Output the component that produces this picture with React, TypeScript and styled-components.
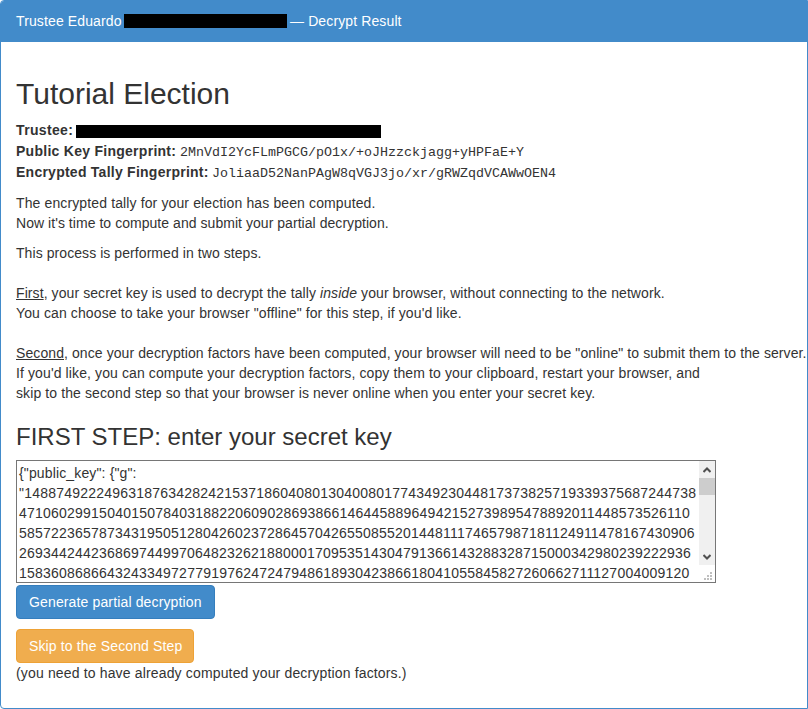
import React from "react";
import styled, { createGlobalStyle } from "styled-components";

const GlobalStyle = createGlobalStyle`
  *, *::before, *::after { box-sizing: border-box; }
  html, body { margin: 0; background: #fff; overflow: hidden; }
  body {
    font-family: "Liberation Sans", Arial, Helvetica, sans-serif;
    font-size: 14px;
    line-height: 20px;
    color: #333;
  }
`;

const Panel = styled.section`
  width: 808px;
  height: 709px;
  border: 1px solid #428bca;
  border-radius: 4px 0 0 4px;
  background: #fff;
  overflow: hidden;
  white-space: nowrap;
`;

const PanelHeading = styled.header`
  display: flex;
  align-items: center;
  height: 41px;
  padding: 0 15px 1px;
  background: #428bca;
  color: #fff;
`;

const Redaction = styled.span<{ $width: number; $height: number; $left: number; $right?: number }>`
  display: block;
  flex: none;
  width: ${(p) => p.$width}px;
  height: ${(p) => p.$height}px;
  margin-left: ${(p) => p.$left}px;
  margin-right: ${(p) => p.$right ?? 0}px;
  background: #000;
`;

const HeadingText = styled.span<{ $width: number }>`
  flex: none;
  width: ${(p) => p.$width}px;
  letter-spacing: 0.12px;
`;

const PanelBody = styled.div`
  padding: 35px 0 0 15px;
`;

const Title = styled.h2`
  margin: 0 0 10px;
  font-size: 30px;
  font-weight: 500;
  line-height: 33px;
`;

const StepTitle = styled.h3`
  margin: 20px 0 10px;
  font-size: 24px;
  font-weight: 500;
  line-height: 27px;
`;

const Facts = styled.div`
  margin-bottom: 10px;
`;

const Fact = styled.div`
  display: flex;
  align-items: flex-start;
  height: 21px;
  ${Redaction} { margin-top: 5px; }
`;

const Label = styled.strong<{ $width: number; $track: number }>`
  flex: none;
  width: ${(p) => p.$width}px;
  letter-spacing: ${(p) => p.$track}px;
`;

const Fingerprint = styled.span`
  font-family: "Liberation Mono", "Courier New", monospace;
  font-size: 13.333px;
  line-height: 23px;
`;

const Paragraph = styled.p`
  margin: 0 0 10px;
`;

const Line = styled.span<{ $track: number }>`
  display: block;
  height: 20px;
  letter-spacing: ${(p) => p.$track}px;
`;

const KeyField = styled.div`
  display: flex;
  width: 700px;
  height: 123px;
  margin-bottom: 2px;
  border: 1px solid #767676;
`;

const KeyText = styled.div`
  flex: 1;
  min-width: 0;
  padding: 2px 0 0 2px;
  overflow: hidden;
  font-kerning: normal;
`;

const ScrollColumn = styled.div`
  display: flex;
  flex-direction: column;
  width: 16px;
`;

const Track = styled.div`
  height: 104px;
  background: #f0f0f0;
`;

const Thumb = styled.div`
  height: 17px;
  background: #cdcdcd;
`;

const ArrowCell = styled.div`
  display: flex;
  height: 17px;
  padding: 6px 0 0 4px;
`;

const TrackSpace = styled.div`
  height: 53px;
`;

const Corner = styled.div`
  display: flex;
  padding: 7px 0 0 5px;
`;

const Button = styled.button<{ $tone: "primary" | "warning"; $width: number }>`
  display: block;
  width: ${(p) => p.$width}px;
  height: 34px;
  padding: 0 0 0 12px;
  text-align: left;
  border: 1px solid ${(p) => (p.$tone === "primary" ? "#357ebd" : "#eea236")};
  border-radius: 4px;
  background: ${(p) => (p.$tone === "primary" ? "#428bca" : "#f0ad4e")};
  color: #fff;
  font: inherit;
  letter-spacing: 0.14px;
  & + & { margin-top: 10px; }
`;

const KEY_LINES: [string, number][] = [
  ['{"public_key": {"g":', 0.14],
  ['"148874922249631876342824215371860408013040080177434923044817373825719339375687244738', 0.214],
  ["471060299150401507840318822060902869386614644588964942152739895478892011448573526110", 0.226],
  ["5857223657873431950512804260237286457042655085520144811174657987181124911478167430906", 0.214],
  ["269344244236869744997064823262188000170953514304791366143288328715000342980239222936", 0.214],
  ["158360868664324334972779197624724794861893042386618041055845827260662711127004009120", 0.22],
];

const GRIP_DOTS = [[6, 0], [3, 3], [6, 3], [0, 6], [3, 6], [6, 6]];

function Arrow({ down = false }: { down?: boolean }) {
  return (
    <svg width="8" height="6" viewBox="0 0 8 6">
      <path d={down ? "M0.5 1L4 4.5L7.5 1" : "M0.5 5L4 1.5L7.5 5"} fill="none" stroke="#505050" strokeWidth="2" />
    </svg>
  );
}

export default function App() {
  return (
    <>
      <GlobalStyle />
      <Panel>
        <PanelHeading>
          <HeadingText $width={106}>Trustee Eduardo</HeadingText>
          <Redaction $width={163} $height={14} $left={2} $right={3} />
          <HeadingText $width={112}>— Decrypt Result</HeadingText>
        </PanelHeading>
        <PanelBody>
          <Title>Tutorial Election</Title>
          <Facts>
            <Fact>
              <Label $width={60} $track={0.35}>Trustee:</Label>
              <Redaction $width={305} $height={13} $left={0} />
            </Fact>
            <Fact>
              <Label $width={164} $track={0.27}>Public Key Fingerprint:</Label>
              <Fingerprint>2MnVdI2YcFLmPGCG/pO1x/+oJHzzckjagg+yHPFaE+Y</Fingerprint>
            </Fact>
            <Fact>
              <Label $width={196} $track={0.25}>Encrypted Tally Fingerprint:</Label>
              <Fingerprint>JoliaaD52NanPAgW8qVGJ3jo/xr/gRWZqdVCAWwOEN4</Fingerprint>
            </Fact>
          </Facts>
          <Paragraph>
            <Line $track={0.125}>The encrypted tally for your election has been computed.</Line>
            <Line $track={0.045}>Now it's time to compute and submit your partial decryption.</Line>
          </Paragraph>
          <Paragraph>
            <Line $track={0.07}>This process is performed in two steps.</Line>
            <br />
            <Line $track={0.085}>
              <u>First</u>, your secret key is used to decrypt the tally <em>inside</em> your browser, without connecting to the network.
            </Line>
            <Line $track={0.11}>You can choose to take your browser "offline" for this step, if you'd like.</Line>
            <br />
            <Line $track={0.088}>
              <u>Second</u>, once your decryption factors have been computed, your browser will need to be "online" to submit them to the server.
            </Line>
            <Line $track={0.11}>
              If you'd like, you can compute your decryption factors, copy them to your clipboard, restart your browser, and
            </Line>
            <Line $track={0.108}>skip to the second step so that your browser is never online when you enter your secret key.</Line>
          </Paragraph>
          <StepTitle>FIRST STEP: enter your secret key</StepTitle>
          <KeyField>
            <KeyText>
              {KEY_LINES.map(([text, track]) => (
                <Line key={text} $track={track}>{text}</Line>
              ))}
            </KeyText>
            <ScrollColumn>
              <Track>
                <ArrowCell><Arrow /></ArrowCell>
                <Thumb />
                <TrackSpace />
                <ArrowCell><Arrow down /></ArrowCell>
              </Track>
              <Corner>
                <svg width="8" height="8" viewBox="0 0 8 8" shapeRendering="crispEdges">
                  {GRIP_DOTS.map(([x, y]) => (
                    <rect key={`${x}-${y}`} x={x} y={y} width="2" height="2" fill="#bfbfbf" />
                  ))}
                </svg>
              </Corner>
            </ScrollColumn>
          </KeyField>
          <Button $tone="primary" $width={199}>Generate partial decryption</Button>
          <Button $tone="warning" $width={178}>Skip to the Second Step</Button>
          <Line $track={0.155}>(you need to have already computed your decryption factors.)</Line>
        </PanelBody>
      </Panel>
    </>
  );
}
